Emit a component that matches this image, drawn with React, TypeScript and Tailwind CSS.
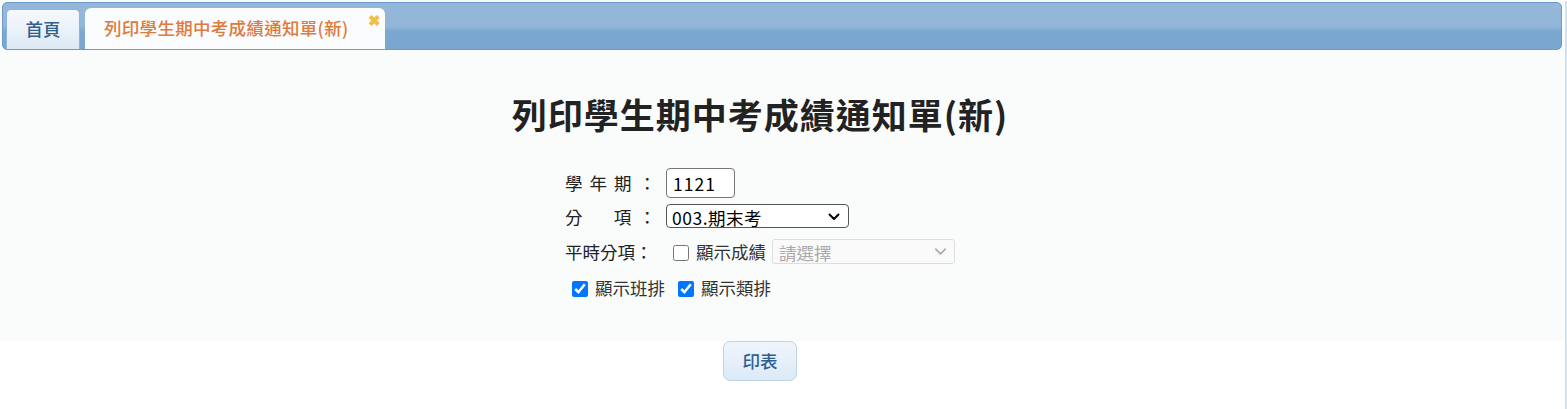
import { ChevronDown } from 'lucide-react';

const font = "font-['Microsoft_JhengHei','Noto_Sans_CJK_TC','Noto_Sans',sans-serif]";

function Chevron({ className }: { className: string }) {
  return (
    <svg viewBox="0 0 12 8" className={className} fill="none" stroke="currentColor" strokeWidth="2" strokeLinecap="round" strokeLinejoin="round">
      <path d="M1.5 1.5 6 6l4.5-4.5" />
    </svg>
  );
}

function Label({ chars }: { chars: string[] }) {
  return (
    <span className="flex w-[101px]">
      <span className="flex w-[91px] justify-between">
        {chars.map((c, i) => (
          <span key={i} className={c === '' ? 'w-[17px]' : ''}>
            {c}
          </span>
        ))}
      </span>
    </span>
  );
}

function Tabs() {
  return (
    <div className="pl-[2px] pr-[3px] pt-[2px]">
      <div className="relative flex h-[48px] items-end gap-[5px] overflow-hidden rounded-[5px] border border-[#6b9bcd] bg-[linear-gradient(#95b8da_0%,#93b6d9_50%,#7ba8d1_62%,#7aa7d0_100%)] pl-[3px]">
        <div className="flex h-[40px] w-[74px] items-center justify-center rounded-t-[5px] border border-b-0 border-[#8fb2d6] bg-[linear-gradient(#f6f9fd,#e9f1f9_55%,#dce8f4)] text-[17.5px] font-medium text-[#2f5f8f]">
          首頁
        </div>
        <div className="relative flex h-[41px] w-[300px] items-center rounded-t-[6px] bg-[#fafcfd] pl-[19px] text-[17.5px] font-medium tracking-[0.3px] text-[#e07a3c]">
          列印學生期中考成績通知單(新)
          <span className="absolute right-[4px] top-[4px] text-[15px] leading-none font-bold text-[#f0c040]">✖</span>
        </div>
      </div>
    </div>
  );
}

export default function App() {
  return (
    <div className={`${font} h-[409px] w-[1567px] overflow-hidden bg-white text-[#222]`}>
      <div className="flex">
        <div className="flex-1">
          <div className="bg-[#fafcfc]">
            <Tabs />
            <div className="flex flex-col items-center pb-[36px] pr-[45px] pt-[40px]">
              <h1 className="text-[35px] font-bold leading-[48px] tracking-[1px] text-[#222]">
                列印學生期中考成績通知單(新)
              </h1>
              <div className="mt-[26px] flex flex-col text-[17.5px] text-[#222]">
                <div className="flex h-[38px] items-center">
                  <Label chars={['學', '年', '期', '：']} />
                  <input
                    readOnly
                    value="1121"
                    className="h-[30px] w-[69px] rounded-[4px] border border-[#767676] bg-white px-[6px] text-[17.5px] tracking-[1px] text-black outline-none"
                  />
                </div>
                <div className="flex h-[31px] items-center">
                  <Label chars={['分', '', '項', '：']} />
                  <div className="relative">
                    <select className="h-[24px] w-[183px] appearance-none rounded-[4px] border border-[#555] bg-white pl-[5px] text-[17.5px] tracking-[0.5px] text-black outline-none">
                      <option>003.期末考</option>
                    </select>
                    <Chevron className="pointer-events-none absolute right-[9px] top-[9px] h-[8px] w-[12px] text-black" />
                  </div>
                </div>
                <div className="flex h-[39px] items-center">
                  <span className="w-[108px]">平時分項：</span>
                  <input type="checkbox" className="h-[16px] w-[16px] accent-[#0075ff]" />
                  <span className="ml-[7px] text-[#333]">顯示成績</span>
                  <div className="relative ml-[6px]">
                    <select disabled className="h-[25px] w-[183px] appearance-none rounded-[3px] border border-[#dddddd] bg-[#fafafa] pl-[6px] text-[17.5px] text-[#aaa] outline-none">
                      <option>請選擇</option>
                    </select>
                    <ChevronDown className="pointer-events-none absolute right-[5px] top-[3px] h-[19px] w-[19px] text-[#aaa]" strokeWidth={2} />
                  </div>
                </div>
                <div className="flex h-[33px] items-center pl-[7px]">
                  <input type="checkbox" defaultChecked className="h-[16px] w-[16px] accent-[#0075ff]" />
                  <span className="ml-[7px] text-[#333]">顯示班排</span>
                  <input type="checkbox" defaultChecked className="ml-[13px] h-[16px] w-[16px] accent-[#0075ff]" />
                  <span className="ml-[7px] text-[#333]">顯示類排</span>
                </div>
              </div>
            </div>
          </div>
          <div className="flex justify-center pr-[45px]">
            <button className="h-[40px] w-[74px] rounded-[7px] border border-[#bcd3e8] bg-[linear-gradient(#eef5fc,#e6f0fa_50%,#dbe9f7)] text-[17.5px] font-medium text-[#2f5f8f]">
              印表
            </button>
          </div>
        </div>
        <div className="mt-[1px] h-[408px] w-[2px] bg-[#d3e1ee]" />
      </div>
    </div>
  );
}
